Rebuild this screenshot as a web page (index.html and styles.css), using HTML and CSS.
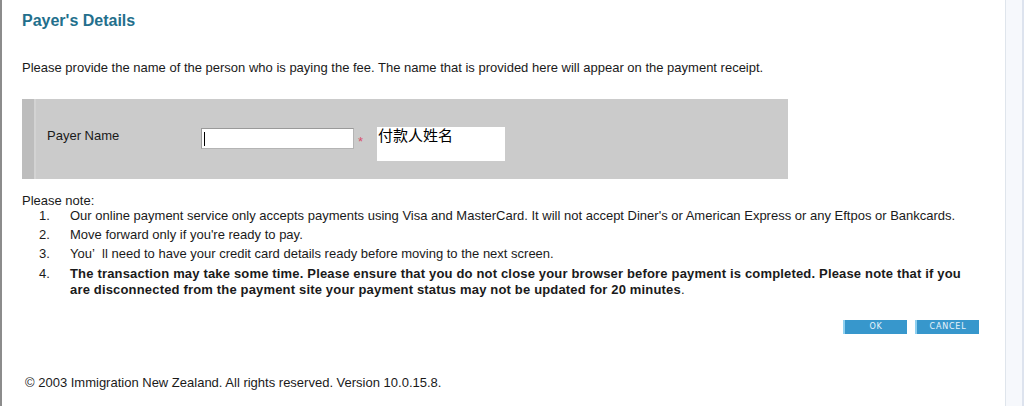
FILE: index.html
```html
<!DOCTYPE html>
<html>
<head>
<meta charset="utf-8">
<link rel="stylesheet" href="styles.css">
</head>
<body>
<div class="page">
  <div class="main">
    <h1 class="title">Payer's Details</h1>
    <p class="intro">Please provide the name of the person who is paying the fee. The name that is provided here will appear on the payment receipt.</p>
    <div class="panel">
      <div class="strip"></div>
      <div class="panel-body">
        <div class="label">Payer Name</div>
        <div class="field"><span class="caret"></span></div>
        <span class="req">*</span>
        <div class="hint">付款人姓名</div>
      </div>
    </div>
    <div class="notes">
      <div class="notes-head">Please note:</div>
      <ol class="list">
        <li class="item"><span class="num">1.</span><span class="txt">Our online payment service only accepts payments using Visa and MasterCard. It will not accept Diner's or American Express or any Eftpos or Bankcards.</span></li>
        <li class="item"><span class="num">2.</span><span class="txt">Move forward only if you're ready to pay.</span></li>
        <li class="item"><span class="num">3.</span><span class="txt">You’&nbsp; ll need to have your credit card details ready before moving to the next screen.</span></li>
        <li class="item bold"><span class="num">4.</span><span class="txt"><b class="strong">The transaction may take some time. Please ensure that you do not close your browser before payment is completed. Please note that if you are disconnected from the payment site your payment status may not be updated for 20 minutes</b>.</span></li>
      </ol>
    </div>
    <div class="actions">
      <span class="btn">OK</span>
      <span class="btn">CANCEL</span>
    </div>
    <div class="footer">© 2003 Immigration New Zealand. All rights reserved. Version 10.0.15.8.</div>
  </div>
  <div class="rightbar"></div>
</div>
</body>
</html>
```
FILE: styles.css
```css
html, body {
  margin: 0;
  padding: 0;
  background: #ffffff;
}
body {
  font-family: "Liberation Sans", Arial, sans-serif;
  font-size: 13px;
  color: #1a1a1a;
}
.page {
  display: flex;
  height: 406px;
  overflow: hidden;
}
.main {
  flex: 1;
  border-left: 2px solid #8c8c8c;
  padding-left: 20px;
  border-right: 1px solid #dfe5ec;
}
.rightbar {
  width: 16px;
  background: #f6f8fc;
  border-right: 2px solid #dde3ee;
}
.title {
  margin: 0;
  padding-top: 12px;
  font-size: 16px;
  line-height: 18px;
  font-weight: bold;
  color: #236f8c;
}
.intro {
  margin: 30px 0 0 0;
  line-height: 15px;
}
.panel {
  margin-top: 24px;
  width: 766px;
  height: 80px;
  display: flex;
  background: #cbcbcb;
}
.strip {
  width: 12px;
  background: #bdbdbd;
  border-right: 2px solid #d3d3d3;
}
.panel-body {
  flex: 1;
  display: flex;
  align-items: flex-start;
  padding-top: 28px;
}
.label {
  width: 154px;
  padding-left: 11px;
  padding-top: 1px;
  line-height: 15px;
}
.field {
  width: 151px;
  height: 19px;
  margin-top: 1px;
  background: #fff;
  border: 1px solid #9a9a9a;
  border-bottom-color: #b4b4b4;
  border-right-color: #b4b4b4;
  display: flex;
  align-items: center;
}
.caret {
  width: 1px;
  height: 14px;
  margin-left: 2px;
  background: #000;
}
.req {
  color: #d9506a;
  font-size: 13px;
  line-height: 13px;
  margin: 8px 0 0 4px;
  width: 19px;
}
.hint {
  width: 128px;
  height: 34px;
  background: #fff;
  font-family: "Noto Sans CJK SC", "Liberation Sans", sans-serif;
  font-size: 15px;
  line-height: 16px;
  padding-left: 1px;
  box-sizing: border-box;
  color: #000;
}
.notes {
  margin-top: 14px;
}
.notes-head {
  line-height: 15px;
}
.list {
  list-style: none;
  margin: 0;
  padding: 0;
}
.item {
  display: flex;
  line-height: 15px;
  margin-top: 4px;
}
.item:first-child {
  margin-top: 0;
}
.item.bold {
  line-height: 16px;
  margin-top: 5px;
}
.strong {
  letter-spacing: 0.17px;
}
.num {
  width: 48px;
  padding-left: 17px;
  box-sizing: border-box;
  flex: none;
}
.txt {
  width: 895px;
}
.actions {
  display: flex;
  justify-content: flex-end;
  gap: 8px;
  margin-top: 22px;
  width: 957px;
}
.btn {
  width: 64px;
  height: 14px;
  background: #3797cc;
  border-left: 2px solid #8fd0f0;
  box-sizing: border-box;
  color: #e8f4fb;
  font-family: "DejaVu Sans", sans-serif;
  font-size: 8px;
  letter-spacing: 0.8px;
  line-height: 14px;
  text-align: center;
}
.footer {
  margin-top: 41px;
  padding-left: 3px;
  line-height: 15px;
}
```
